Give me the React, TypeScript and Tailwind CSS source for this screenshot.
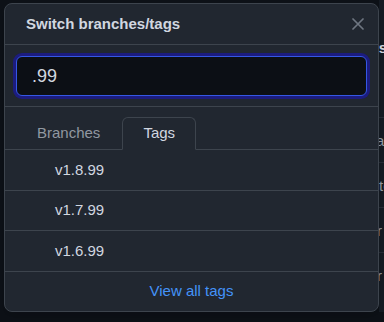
import React from "react";

const tags = ["v1.8.99", "v1.7.99", "v1.6.99"];

export default function App() {
  return (
    <div
      className="relative w-[384px] h-[322px] overflow-hidden bg-[#0d1117]"
      style={{ fontFamily: '"Liberation Sans", Arial, sans-serif' }}
    >
      {/* underlying page */}
      <div className="flex h-full">
        <div className="w-[379px] shrink-0" />
        <div className="flex-1 flex flex-col bg-[#151b23] h-[312px] text-[15px] leading-none">
          <div className="h-[30px]" />
          <div className="h-[34px] flex items-center text-[#d1d7e0] font-bold -ml-[6px]">rs</div>
          <div className="h-[54px] border-b border-[#262c36]" />
          <div className="h-[45px] flex items-center text-[#9198a1] -ml-[3px] border-b border-[#262c36]">a</div>
          <div className="h-[45px] flex items-center text-[#9198a1] border-b border-[#262c36]">te</div>
          <div className="h-[45px] flex items-center text-[#9198a1] -ml-[2px] border-b border-[#262c36]">r</div>
          <div className="h-[45px] flex items-center text-[#9198a1] -ml-[2px]">r</div>
        </div>
      </div>

      {/* overlay panel */}
      <div className="absolute left-[4px] top-[3px] w-[375px] h-[309px] rounded-lg border border-[#3d444d] bg-[#212730] flex flex-col overflow-hidden shadow-lg">
        {/* header */}
        <div className="h-[41px] shrink-0 flex items-center justify-between pl-[21px] pr-[14px] border-b border-[#3d444d]">
          <span className="text-[15px] font-bold text-[#d1d7e0]">Switch branches/tags</span>
          <svg width="12" height="12" viewBox="0 0 12 12" className="text-[#6e7681]">
            <path d="M1 1L11 11M11 1L1 11" stroke="currentColor" strokeWidth="1.7" strokeLinecap="round" />
          </svg>
        </div>

        {/* filter input */}
        <div className="h-[62px] shrink-0 px-[11px] pt-[11px] border-b border-[#3d444d]">
          <div className="h-10 w-full rounded-md border border-[#3557e4] bg-[#0c0f15] ring-[3px] ring-[#1c1c7e] flex items-center pl-[15px] text-[18px] text-[#d1d7e0]">
            .99
          </div>
        </div>

        {/* tabs */}
        <div className="h-[43px] shrink-0 flex items-end px-[11px] border-b border-[#3d444d] text-[15px]">
          <div className="h-[33px] -mb-px px-5 flex items-center border border-transparent text-[#9198a1]">
            Branches
          </div>
          <div className="h-[33px] -mb-px ml-[1px] px-5 flex items-center rounded-t-md border border-[#3d444d] border-b-[#212730] bg-[#212730] text-[#d1d7e0]">
            Tags
          </div>
        </div>

        {/* rows */}
        {tags.map((t) => (
          <div
            key={t}
            className="h-[40.67px] shrink-0 flex items-center pl-[50px] border-b border-[#3d444d] text-[15px] text-[#d1d7e0]"
          >
            {t}
          </div>
        ))}

        {/* footer */}
        <div className="flex-1 flex items-center justify-center text-[15px] text-[#4493f8]">
          View all tags
        </div>
      </div>
    </div>
  );
}
